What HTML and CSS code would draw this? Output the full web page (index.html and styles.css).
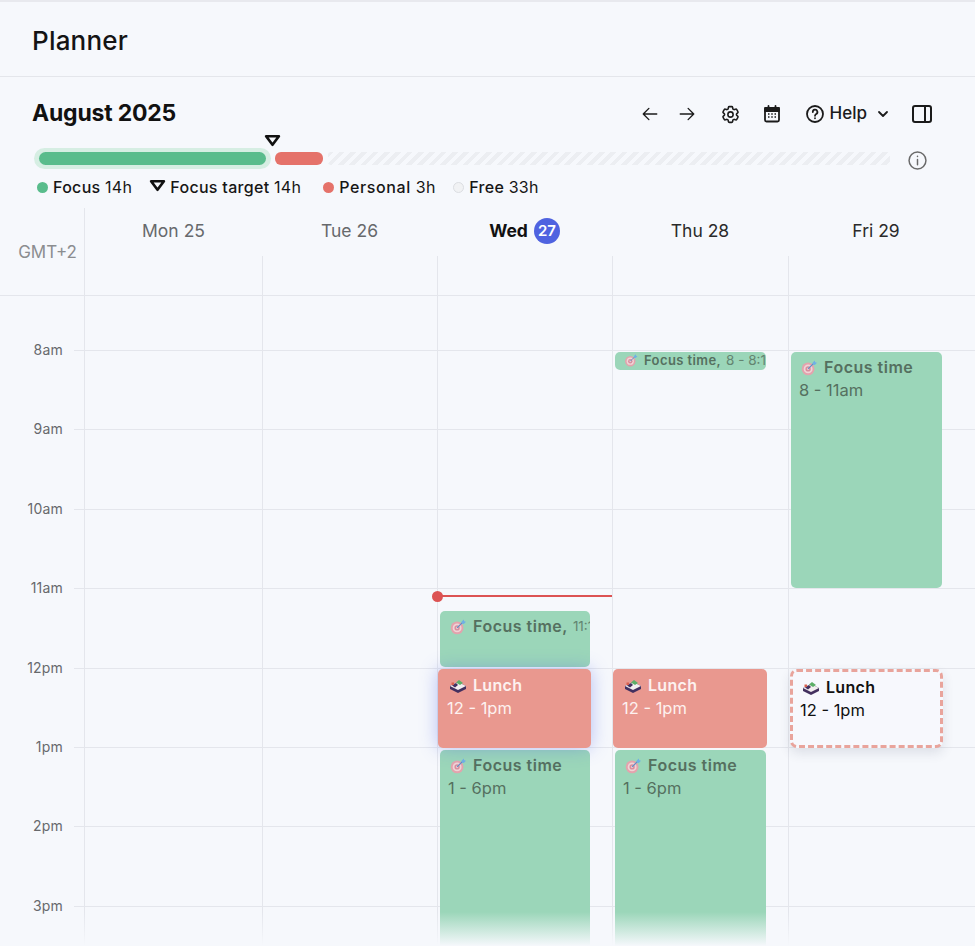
FILE: index.html
```html
<!DOCTYPE html>
<html lang="en">
<head>
  <meta charset="UTF-8">
  <meta name="viewport" content="width=device-width, initial-scale=1.0">
  <title>Planner</title>
  <link rel="stylesheet" href="styles.css">
</head>
<body>
  <svg class="sprites" xmlns="http://www.w3.org/2000/svg">
    <symbol id="target" viewBox="0 0 18 18">
      <circle cx="8" cy="10" r="7.2" fill="#e3a3ad"/>
      <circle cx="8" cy="10" r="5" fill="#f1d3d6"/>
      <circle cx="8" cy="10" r="3" fill="#d98f9e"/>
      <circle cx="8" cy="10" r="1.2" fill="#f1d3d6"/>
      <path d="M8 10l7-7" stroke="#5b8fc9" stroke-width="1.3" fill="none"/>
      <path d="M13 3l2.5-2.5.5 2 2 .5-2.5 2.5-2-.5z" fill="#6fb0e6"/>
    </symbol>
    <symbol id="bento" viewBox="0 0 18 14">
      <path d="M1 7l8-4 8 4v3l-8 4-8-4z" fill="#43305f"/>
      <path d="M1 7l8-4 8 4-8 4z" fill="#f3eef0"/>
      <path d="M3 6.5l4-2.5 2 2-3 2.500z" fill="#43305f"/>
      <path d="M7 3.500l3-2.500 4 3-3 2z" fill="#5cae68"/>
      <path d="M2.500 3.500h2.500v2.500h-2.500z" fill="#d9604f"/>
    </symbol>
  </svg>

  <header class="topbar">
    <h1>Planner</h1>
  </header>

  <section class="summary">
    <div class="title-row">
      <h2>August 2025</h2>
      <div class="tools">
        <svg class="icon arrow arrow-back" viewBox="0 0 24 24"><path d="M10.500 19.500 3 12l7.500-7.500M3 12h18"/></svg>
        <svg class="icon arrow" viewBox="0 0 24 24"><path d="M13.500 4.500 21 12l-7.500 7.500M21 12H3"/></svg>
        <svg class="icon cog" viewBox="0 0 24 24"><path d="M9.594 3.940c.09-.542.56-.94 1.110-.94h2.593c.55 0 1.020.398 1.110.94l.213 1.281c.063.374.313.686.645.870.074.04.147.083.22.127.325.196.72.257 1.075.124l1.217-.456a1.125 1.125 0 0 1 1.370.49l1.296 2.247a1.125 1.125 0 0 1-.26 1.431l-1.003.827c-.293.241-.438.613-.43.992a7.723 7.723 0 0 1 0 .255c-.008.378.137.75.43.991l1.004.827c.424.35.534.955.26 1.430l-1.298 2.247a1.125 1.125 0 0 1-1.369.491l-1.217-.456c-.355-.133-.75-.072-1.076.124a6.470 6.470 0 0 1-.22.128c-.331.183-.581.495-.644.869l-.213 1.281c-.09.543-.56.94-1.110.94h-2.594c-.55 0-1.019-.398-1.110-.94l-.213-1.281c-.062-.374-.312-.686-.644-.870a6.520 6.520 0 0 1-.22-.127c-.325-.196-.72-.257-1.076-.124l-1.217.456a1.125 1.125 0 0 1-1.369-.49l-1.297-2.247a1.125 1.125 0 0 1 .26-1.431l1.004-.827c.292-.24.437-.613.43-.991a6.932 6.932 0 0 1 0-.255c.007-.38-.138-.751-.43-.992l-1.004-.827a1.125 1.125 0 0 1-.26-1.430l1.297-2.247a1.125 1.125 0 0 1 1.370-.491l1.216.456c.356.133.751.072 1.076-.124.072-.044.146-.086.22-.128.332-.183.582-.495.644-.869l.214-1.280Z"/><circle cx="12" cy="12" r="3"/></svg>
        <svg class="icon cal-icon" viewBox="0 0 18 18">
          <path class="cal-fill" d="M2 3h14v3H2z"/>
          <rect x="2" y="3" width="14" height="13.500" rx="1.500"/>
          <path d="M5.500 1v3M12.500 1v3"/>
          <path class="cal-dots" d="M5 9h1.500M8.250 9h1.500M11.500 9H13M5 12h1.500M8.250 12h1.500M11.500 12H13"/>
        </svg>
        <div class="help">
          <svg class="icon" viewBox="0 0 18 18"><circle cx="9" cy="9" r="8"/><path d="M6.800 7a2.300 2.300 0 1 1 3.400 2c-.8.5-1.200.9-1.200 1.800M9 13.200v.1"/></svg>
          <span>Help</span>
          <svg class="icon chevron" viewBox="0 0 12 12"><path d="M2 4l4 4 4-4"/></svg>
        </div>
        <svg class="icon panel" viewBox="0 0 20 18"><rect x="1" y="1" width="18" height="16" rx="2"/><path d="M13 1v16"/></svg>
      </div>
    </div>

    <div class="usage">
      <div class="usage-focus"><div class="usage-focus-bar"></div></div>
      <svg class="marker usage-marker" viewBox="0 0 16 12"><path d="M2 2h12l-6 8z"/></svg>
      <div class="usage-personal"></div>
      <div class="usage-free"></div>
      <svg class="info" viewBox="0 0 18 18"><circle cx="9" cy="9" r="8"/><path d="M9 8v5M9 5v.2"/></svg>
    </div>

    <ul class="legend">
      <li><i class="dot dot-focus"></i>Focus <span>14h</span></li>
      <li><svg class="marker" viewBox="0 0 16 12"><path d="M2 2h12l-6 8z"/></svg>Focus target <span>14h</span></li>
      <li class="legend-personal"><i class="dot dot-personal"></i>Personal <span>3h</span></li>
      <li><i class="dot dot-free"></i>Free <span>33h</span></li>
    </ul>
  </section>

  <section class="calendar">
    <div class="cal-head">
      <div class="timezone">GMT+2</div>
      <div class="head-day head-day-first"><div class="day-label muted">Mon 25</div><div class="head-tick"></div></div>
      <div class="head-day"><div class="day-label muted">Tue 26</div><div class="head-tick"></div></div>
      <div class="head-day"><div class="day-label today">Wed <b>27</b></div><div class="head-tick"></div></div>
      <div class="head-day"><div class="day-label">Thu 28</div><div class="head-tick"></div></div>
      <div class="head-day"><div class="day-label">Fri 29</div><div class="head-tick"></div></div>
    </div>

    <div class="cal-body">
      <div class="hour"><span>8am</span></div>
      <div class="hour"><span>9am</span></div>
      <div class="hour"><span>10am</span></div>
      <div class="hour"><span>11am</span></div>
      <div class="hour"><span>12pm</span></div>
      <div class="hour"><span>1pm</span></div>
      <div class="hour"><span>2pm</span></div>
      <div class="hour"><span>3pm</span></div>

      <div class="days">
        <div class="day"></div>
        <div class="day"></div>
        <div class="day">
          <div class="now" style="top: 299px"></div>
          <div class="event focus narrow" style="top: 315px; height: 56px">
            <div class="event-title"><svg class="event-icon"><use href="#target"/></svg><b>Focus time,</b><span class="inline-time">11:15 - 12pm</span></div>
          </div>
          <div class="event lunch lifted" style="top: 373px; height: 79px">
            <div class="event-title"><svg class="event-icon"><use href="#bento"/></svg><b>Lunch</b></div>
            <div class="event-time">12 - 1pm</div>
          </div>
          <div class="event focus narrow" style="top: 454px; height: 300px">
            <div class="event-title"><svg class="event-icon"><use href="#target"/></svg><b>Focus time</b></div>
            <div class="event-time">1 - 6pm</div>
          </div>
        </div>
        <div class="day">
          <div class="event focus small" style="top: 56px; height: 18px">
            <div class="event-title"><svg class="event-icon"><use href="#target"/></svg><b>Focus time,</b><span class="inline-time">8 - 8:15am</span></div>
          </div>
          <div class="event lunch wide" style="top: 373px; height: 79px">
            <div class="event-title"><svg class="event-icon"><use href="#bento"/></svg><b>Lunch</b></div>
            <div class="event-time">12 - 1pm</div>
          </div>
          <div class="event focus" style="top: 454px; height: 300px">
            <div class="event-title"><svg class="event-icon"><use href="#target"/></svg><b>Focus time</b></div>
            <div class="event-time">1 - 6pm</div>
          </div>
        </div>
        <div class="day">
          <div class="event focus" style="top: 56px; height: 236px">
            <div class="event-title"><svg class="event-icon"><use href="#target"/></svg><b>Focus time</b></div>
            <div class="event-time">8 - 11am</div>
          </div>
          <div class="event draft" style="top: 373px; height: 79px">
            <div class="event-title"><svg class="event-icon"><use href="#bento"/></svg><b>Lunch</b></div>
            <div class="event-time">12 - 1pm</div>
          </div>
        </div>
      </div>
      <div class="fade"></div>
    </div>
  </section>
</body>
</html>
```

FILE: styles.css
```css
* {
  box-sizing: border-box;
}
html, body {
  height: 100%;
}
body {
  margin: 0;
  display: flex;
  flex-direction: column;
  overflow: hidden;
  font-family: Inter, "Open Sans", sans-serif;
  background-color: #f6f8fc;
  color: #111;
}
.sprites {
  display: none;
}

/* top bar */
.topbar {
  height: 77px;
  flex: none;
  display: flex;
  align-items: center;
  padding: 2px 32px 0;
  border-top: 2px solid #e8e9ee;
  border-bottom: 1px solid #e4e6eb;
}
h1 {
  margin: 0;
  font-size: 26px;
  font-weight: 500;
  letter-spacing: 0.2px;
  color: #141414;
}

/* month summary */
.summary {
  flex: none;
  padding: 20px 43px 0 32px;
}
.title-row {
  height: 34px;
  display: flex;
  align-items: center;
  justify-content: space-between;
}
h2 {
  margin: -2px 0 0;
  font-size: 23px;
  font-weight: 700;
  letter-spacing: -0.2px;
  color: #111;
}
.tools {
  display: flex;
  align-items: center;
}
.icon {
  display: block;
  fill: none;
  stroke: #1b1b1b;
  stroke-width: 1.8;
  stroke-linecap: round;
  stroke-linejoin: round;
}
.arrow {
  width: 18px;
  height: 18px;
  margin-right: 24px;
}
.arrow-back {
  margin-right: 19px;
}
.cog {
  width: 21px;
  height: 21px;
  margin-right: 22px;
}
.cal-icon {
  width: 18px;
  height: 18px;
  margin-right: 25px;
}
.cal-fill {
  fill: #1b1b1b;
}
.cal-dots {
  stroke-width: 1.5;
  stroke-linecap: butt;
}
.help {
  display: flex;
  align-items: center;
  margin-right: 23px;
}
.help > svg:first-child {
  width: 18px;
  height: 18px;
  margin-right: 6px;
}
.help span {
  font-size: 17px;
  font-weight: 500;
  color: #1b1b1b;
  margin-top: -3px;
}
.chevron {
  width: 12px;
  height: 12px;
  margin-left: 10px;
}
.panel {
  width: 20px;
  height: 18px;
  stroke-width: 2;
}

/* usage bar */
.usage {
  position: relative;
  display: flex;
  align-items: center;
  height: 21px;
  margin: 17px 0 0 2px;
}
.usage-focus {
  width: 237px;
  height: 21px;
  padding: 4px 5px;
  border-radius: 11px;
  background-color: #d6eee3;
}
.usage-focus-bar {
  height: 13px;
  border-radius: 7px;
  background-color: #59bc8c;
}
.usage-personal {
  width: 48px;
  height: 13px;
  margin-left: 4px;
  border-radius: 6px;
  background-color: #e5726a;
}
.usage-free {
  width: 562px;
  height: 13px;
  margin-left: 5px;
  border-radius: 3px;
  background: repeating-linear-gradient(135deg, #eceef2 0 4px, transparent 4px 8px);
}
.info {
  width: 19px;
  height: 19px;
  margin: 3px 0 0 18px;
  fill: none;
  stroke: #6a6a6a;
  stroke-width: 1.4;
  stroke-linecap: round;
}
.marker {
  display: block;
  flex: none;
  width: 17px;
  height: 13px;
  fill: none;
  stroke: #111;
  stroke-width: 2.500;
  stroke-linejoin: round;
}
.usage-marker {
  position: absolute;
  left: 230px;
  top: -14px;
}
.legend {
  display: flex;
  align-items: center;
  gap: 17px;
  height: 20px;
  margin: 8px 0 0;
  padding: 0 0 0 5px;
  list-style: none;
  font-size: 16px;
  font-weight: 500;
  letter-spacing: 0.3px;
  color: #161616;
}
.legend li {
  display: flex;
  align-items: center;
  white-space: pre;
}
.legend li .marker {
  margin-right: 4px;
  margin-top: -3px;
}
.legend span {
  font-weight: 400;
}
.legend-personal {
  margin-left: 5px;
  letter-spacing: 0.6px;
}
.dot {
  width: 11px;
  height: 11px;
  margin-right: 5px;
  border-radius: 50%;
}
.dot-focus {
  background-color: #59bc8c;
}
.dot-personal {
  background-color: #e5726a;
}
.dot-free {
  background-color: #f1f2f4;
  border: 1px solid #dcdee2;
}

/* calendar */
.calendar {
  flex: 1;
  min-height: 0;
  display: flex;
  flex-direction: column;
  margin-top: 11px;
}
.cal-head {
  flex: none;
  height: 88px;
  display: grid;
  grid-template-columns: 84px 178px 175px 175px 176px 176px;
  border-bottom: 1px solid #e4e6ec;
}
.timezone {
  padding: 33px 7px 0 0;
  text-align: right;
  font-size: 17px;
  line-height: 22px;
  color: #8b8d90;
}
.head-day {
  display: flex;
  flex-direction: column;
}
.head-day-first {
  border-left: 1px solid #e4e6ec;
}
.day-label {
  height: 48px;
  padding-top: 10px;
  display: flex;
  align-items: flex-start;
  justify-content: center;
  gap: 6px;
  font-size: 17.500px;
  line-height: 26px;
  color: #2a2a2a;
}
.muted {
  color: #67696c;
}
.today {
  font-weight: 700;
  color: #111;
}
.today b {
  width: 26px;
  height: 26px;
  border-radius: 50%;
  text-align: center;
  font-size: 15px;
  font-weight: 600;
  background-color: #4f63e0;
  color: #fff;
}
.head-tick {
  flex: 1;
  border-left: 1px solid #e4e6ec;
}
.head-day-first .head-tick {
  border-left: none;
}
.cal-body {
  position: relative;
  flex: 1;
  min-height: 0;
  overflow: hidden;
  padding-top: 54px;
}
.hour {
  height: 79.400px;
  margin-left: 74px;
  border-top: 1px solid #e4e6ec;
  position: relative;
}
.hour span {
  position: absolute;
  right: 100%;
  top: -11px;
  margin-right: 11px;
  font-size: 14px;
  letter-spacing: 0.2px;
  line-height: 20px;
  color: #67696c;
  white-space: nowrap;
}
.days {
  position: absolute;
  inset: 0;
  display: grid;
  grid-template-columns: 178px 175px 175px 176px 176px;
  padding-left: 84px;
}
.day {
  position: relative;
  border-left: 1px solid #e4e6ec;
}

/* events */
.event {
  position: absolute;
  left: 2px;
  width: 151px;
  padding: 4px 8px;
  border-radius: 5px;
  overflow: hidden;
  font-size: 16.500px;
  line-height: 23px;
  white-space: nowrap;
}
.narrow {
  width: 150px;
}
.event-title {
  display: flex;
  align-items: center;
}
.event-title b {
  font-weight: 600;
  font-size: 16px;
  letter-spacing: 0.5px;
}
.event-icon {
  flex: none;
  width: 18px;
  height: 16px;
  margin: 0 6px 0 1px;
}
.inline-time {
  margin-left: 5px;
  font-size: 13.500px;
  opacity: 0.8;
}
.event-time {
  font-weight: 400;
}
.focus {
  background-color: #9bd6b9;
  color: #55705f;
}
.lunch {
  left: 0;
  width: 153px;
  padding: 5px 9px;
  background-color: #e9988f;
  color: #fdf1ef;
}
.lunch b, .draft b {
  letter-spacing: 0.3px;
}
.lunch .event-icon, .draft .event-icon {
  margin-left: 2px;
}
.lifted {
  z-index: 2;
  box-shadow: 0 0 18px rgba(84, 104, 230, 0.4);
}
.wide {
  width: 154px;
}
.draft {
  left: 1px;
  width: 153px;
  padding: 4px 7px;
  background-color: #f7f8fd;
  border: 3px dashed #e9a49c;
  border-radius: 7px;
  color: #111;
  box-shadow: 0 5px 12px rgba(40, 50, 80, 0.12);
}
.small {
  padding: 0 0 0 9px;
  line-height: 18px;
}
.small .event-title {
  margin-top: -1px;
}
.small b {
  font-size: 13px;
  letter-spacing: 0.4px;
}
.small .event-icon {
  width: 14px;
  height: 13px;
  margin: 0 6px 0 0;
}
.small .inline-time {
  font-size: 13.500px;
}
.now {
  position: absolute;
  z-index: 1;
  left: 0;
  right: 0;
  height: 2px;
  background-color: #dc5353;
}
.now::before {
  content: "";
  position: absolute;
  left: -6px;
  top: -4px;
  width: 11px;
  height: 11px;
  border-radius: 50%;
  background-color: #dc5353;
}
.fade {
  position: absolute;
  z-index: 3;
  left: 0;
  right: 0;
  bottom: 0;
  height: 34px;
  background: linear-gradient(to bottom, rgba(246, 248, 252, 0), #f6f8fc);
}
```
